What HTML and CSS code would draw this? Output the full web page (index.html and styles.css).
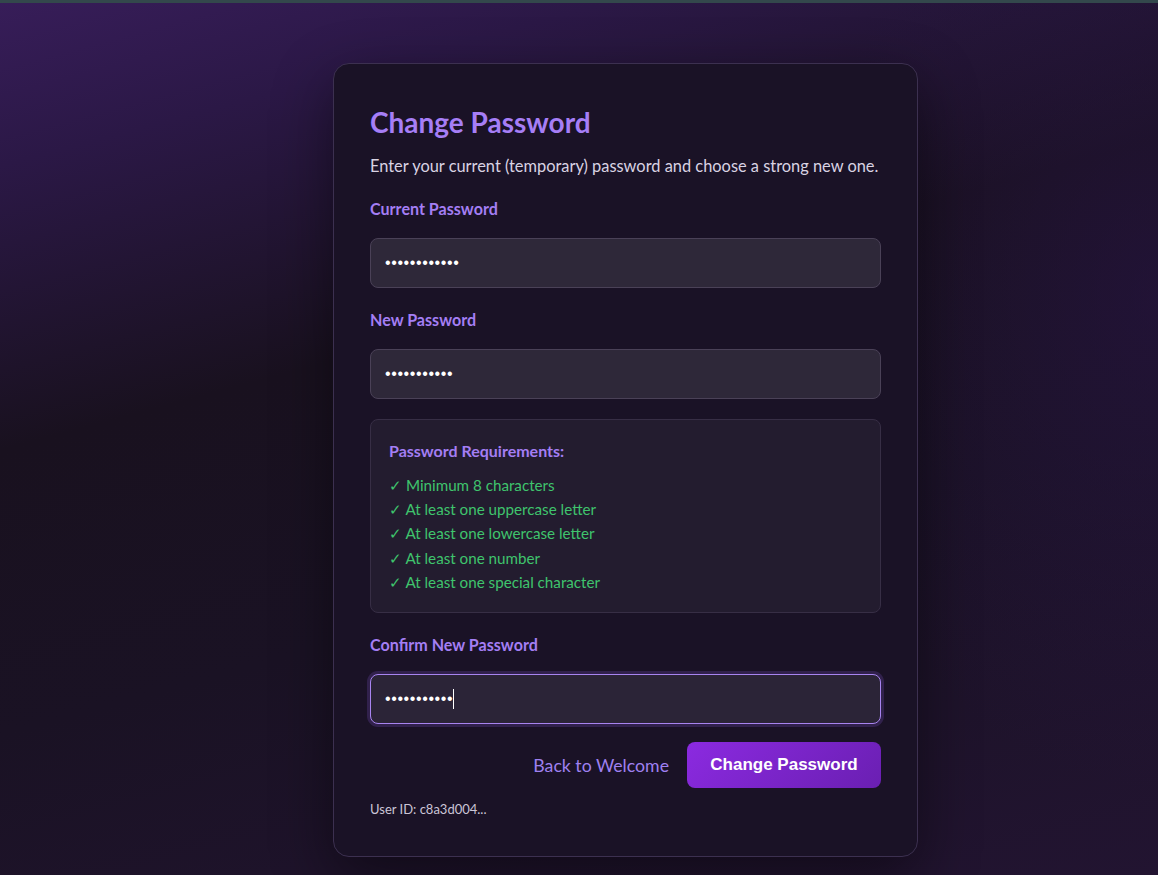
FILE: index.html
```html
<!DOCTYPE html>
<html lang="en">
<head>
<meta charset="utf-8">
<title>Change Password</title>
<link rel="stylesheet" href="styles.css">
</head>
<body>
<div class="topbar"></div>
<main class="page">
  <section class="card">
    <h1 class="title">Change Password</h1>
    <p class="desc">Enter your current (temporary) password and choose a strong new one.</p>

    <div class="field">
      <label class="label" for="cur">Current Password</label>
      <input class="input" id="cur" type="password" value="temppass1234">
    </div>

    <div class="field">
      <label class="label" for="new">New Password</label>
      <input class="input" id="new" type="password" value="NewPass123!">
    </div>

    <div class="reqs">
      <div class="reqs-title">Password Requirements:</div>
      <ul class="reqs-list">
        <li>✓ Minimum 8 characters</li>
        <li>✓ At least one uppercase letter</li>
        <li>✓ At least one lowercase letter</li>
        <li>✓ At least one number</li>
        <li>✓ At least one special character</li>
      </ul>
    </div>

    <div class="field">
      <label class="label" for="conf">Confirm New Password</label>
      <div class="input focused"><span class="dots">•••••••••••</span><span class="caret"></span></div>
    </div>

    <div class="actions">
      <a class="back" href="#">Back to Welcome</a>
      <button class="btn" type="button">Change Password</button>
    </div>

    <div class="userid">User ID: c8a3d004...</div>
  </section>
</main>
</body>
</html>
```
FILE: styles.css
```css
* { box-sizing: border-box; }
html, body { margin: 0; height: 100%; }
body {
  font-family: "Lato", "Noto Sans", sans-serif;
  background:
    radial-gradient(ellipse 500px 700px at 1158px 300px, rgba(40, 20, 70, 0.55), transparent 70%),
    linear-gradient(165deg, #371d59 0%, #2b1846 14%, #19111f 38%, #1a1224 62%, #221431 100%);
  min-height: 875px;
  overflow: hidden;
}
.topbar { height: 3px; background: #33484c; }
.page {
  padding: 60px 0 0 333px;
}
.card {
  width: 585px;
  background: #1a1226;
  border: 1px solid #3c3050;
  border-radius: 16px;
  padding: 36px 36px 38px 36px;
  box-shadow: 0 20px 60px rgba(0, 0, 0, 0.45);
}
.title {
  margin: 4px 0 0;
  font-size: 28px;
  font-weight: 700;
  line-height: 36px;
  color: #a67ef6;
}
.desc {
  margin: 15px 0 0;
  font-size: 16.4px;
  line-height: 22px;
  color: #d9d3e3;
}
.field { margin-top: 21px; }
.label {
  display: block;
  font-size: 16.1px;
  font-weight: 700;
  line-height: 22px;
  color: #a47ef4;
  margin-bottom: 18px;
}
.input {
  display: flex;
  align-items: center;
  width: 100%;
  height: 50px;
  padding: 0 14px;
  background: #2e2839;
  border: 1px solid #4a4157;
  border-radius: 8px;
  color: #ffffff;
  font-family: "Liberation Sans", sans-serif;
  font-size: 16px;
  outline: none;
  letter-spacing: 0.6px;
}
.input.focused {
  background: #2b2437;
  border-color: #a884f0;
  box-shadow: 0 0 0 3px rgba(120, 80, 190, 0.25);
}
.dots { letter-spacing: 0.6px; color: #fff; }
.caret { display: inline-block; width: 1px; height: 20px; background: #ffffff; margin-left: 0; }
.reqs {
  margin-top: 20px;
  background: #231c2f;
  border: 1px solid #372e45;
  border-radius: 8px;
  padding: 20px 18px 18px;
}
.reqs-title {
  font-size: 16px;
  font-weight: 700;
  line-height: 22px;
  color: #a47ef4;
  margin-bottom: 11px;
}
.reqs-list {
  list-style: none;
  margin: 0;
  padding: 0;
}
.reqs-list li {
  font-size: 15.2px;
  line-height: 24.2px;
  color: #3fc46d;
}
.actions {
  margin-top: 18px;
  display: flex;
  justify-content: flex-end;
  align-items: center;
  gap: 18px;
}
.back {
  font-size: 17.7px;
  color: #9f80f0;
  text-decoration: none;
}
.btn {
  height: 46px;
  width: 194px;
  border: none;
  border-radius: 8px;
  background: linear-gradient(135deg, #8b2ae0 0%, #6a1fb2 100%);
  color: #ffffff;
  font-family: "Liberation Sans", Arial, sans-serif;
  font-weight: 700;
  font-size: 17px;
  cursor: pointer;
}
.userid {
  margin-top: 12px;
  font-size: 13px;
  line-height: 18px;
  color: #cbc5d6;
}
```
